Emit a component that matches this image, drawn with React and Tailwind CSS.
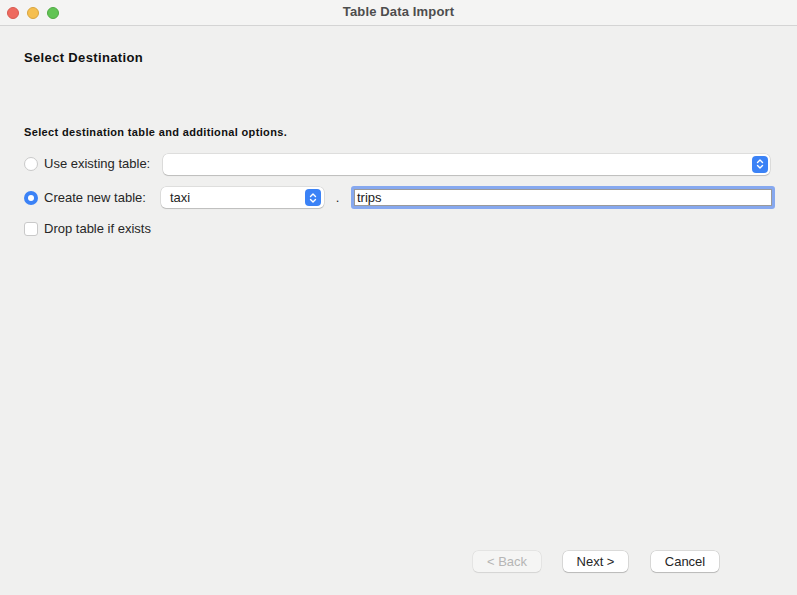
import React from "react";

function Stepper() {
  return (
    <div className="w-[16px] h-[17px] rounded-[4px] bg-[#3b82f6] flex items-center justify-center shrink-0">
      <svg width="8" height="12" viewBox="0 0 8 12" fill="none">
        <path d="M1.5 4.5 L4 2 L6.5 4.5" stroke="white" strokeWidth="1.4" strokeLinecap="round" strokeLinejoin="round" />
        <path d="M1.5 7.5 L4 10 L6.5 7.5" stroke="white" strokeWidth="1.4" strokeLinecap="round" strokeLinejoin="round" />
      </svg>
    </div>
  );
}

function Button({ children, disabled }) {
  return (
    <div
      className={
        "h-[21px] rounded-[5px] flex items-center justify-center text-[13px] " +
        (disabled
          ? "bg-[#f5f5f4] text-[#b5b5b5] shadow-[0_0_0_0.5px_rgba(0,0,0,0.08),0_0.5px_1px_rgba(0,0,0,0.08)]"
          : "bg-white text-[#262626] shadow-[0_0_0_0.5px_rgba(0,0,0,0.18),0_1px_1px_rgba(0,0,0,0.15)]")
      }
    >
      {children}
    </div>
  );
}

export default function App() {
  return (
    <div
      className="w-[797px] h-[595px] bg-[#f0f0ef] flex flex-col text-[#222] overflow-hidden"
      style={{ fontFamily: '"Liberation Sans", Arial, sans-serif' }}
    >
      {/* Title bar */}
      <div className="h-[26px] bg-[#f4f4f3] border-b border-[#d4d4d4] flex items-center relative shrink-0">
        <div className="flex items-center gap-[8px] pl-[7px]">
          <div className="w-[12px] h-[12px] rounded-full bg-[#ee6a5f] border border-[#d85a50]" />
          <div className="w-[12px] h-[12px] rounded-full bg-[#f5bf4f] border border-[#d9a53e]" />
          <div className="w-[12px] h-[12px] rounded-full bg-[#61c454] border border-[#50aa44]" />
        </div>
        <div className="absolute inset-0 flex items-center justify-center text-[13px] font-bold text-[#4d4d4d] pb-[2px] tracking-[0.15px]">
          Table Data Import
        </div>
      </div>

      {/* Content */}
      <div className="flex-1 flex flex-col pl-[24px]">
        <div className="mt-[24px] text-[13px] font-bold text-[#111] leading-[16px] tracking-[0.35px]">Select Destination</div>
        <div className="mt-[59px] text-[11px] font-bold text-[#111] leading-[14px] tracking-[0.35px]">
          Select destination table and additional options.
        </div>

        {/* Row 1 */}
        <div className="mt-[14px] flex items-center h-[22px]">
          <div className="w-[14px] h-[14px] rounded-full bg-white border border-[#c9c9c9] shrink-0" />
          <div className="ml-[6px] w-[119px] text-[13px] text-[#262626]">Use existing table:</div>
          <div className="w-[607px] h-[21px] bg-white rounded-[5px] shadow-[0_0_0_0.5px_rgba(0,0,0,0.15),0_1px_1px_rgba(0,0,0,0.15)] flex items-center justify-end pr-[2px]">
            <Stepper />
          </div>
        </div>

        {/* Row 2 */}
        <div className="mt-[11px] flex items-center h-[23px]">
          <div className="w-[14px] h-[14px] rounded-full bg-[#3b82f6] flex items-center justify-center shrink-0">
            <div className="w-[6px] h-[6px] rounded-full bg-white" />
          </div>
          <div className="ml-[6px] w-[117px] text-[13px] text-[#262626]">Create new table:</div>
          <div className="w-[163px] h-[21px] bg-white rounded-[5px] shadow-[0_0_0_0.5px_rgba(0,0,0,0.15),0_1px_1px_rgba(0,0,0,0.15)] flex items-center justify-between pl-[9px] pr-[3px] text-[13px] text-[#262626]">
            <span>taxi</span>
            <Stepper />
          </div>
          <div className="w-[27px] text-center text-[13px] text-[#262626]">.</div>
          <div className="w-[424px] h-[23px] rounded-[3px] border-[3px] border-[#86a8ef] bg-white flex items-center">
            <div className="w-full h-full border border-[#9a9a9a] bg-white flex items-center pl-[2px] text-[13px] text-[#1a1a1a]">
              trips
            </div>
          </div>
        </div>

        {/* Row 3 */}
        <div className="mt-[11px] flex items-center h-[18px]">
          <div className="w-[14px] h-[14px] rounded-[3px] bg-white border border-[#c9c9c9] shrink-0" />
          <div className="ml-[6px] text-[13px] text-[#262626]">Drop table if exists</div>
        </div>

        <div className="flex-1" />

        {/* Buttons */}
        <div className="flex justify-end pr-[78px] mb-[23px] gap-[22px]">
          <div className="w-[68px]"><Button disabled>&lt; Back</Button></div>
          <div className="w-[65px]"><Button>Next &gt;</Button></div>
          <div className="w-[68px] ml-[1px]"><Button>Cancel</Button></div>
        </div>
      </div>
    </div>
  );
}
